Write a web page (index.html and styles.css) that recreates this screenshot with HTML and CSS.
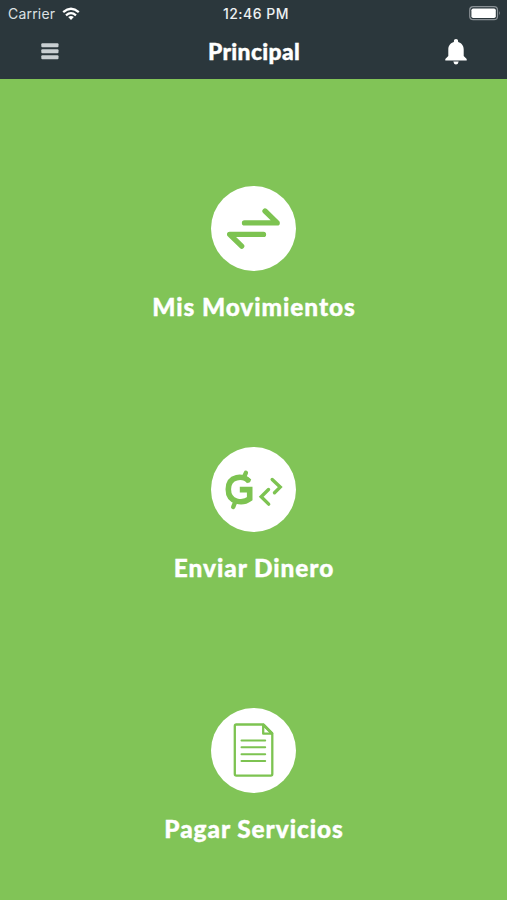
FILE: index.html
```html
<!DOCTYPE html>
<html lang="es">
<head>
<meta charset="utf-8">
<title>Principal</title>
<link rel="stylesheet" href="styles.css">
</head>
<body>
<header class="header">
  <div class="status">
    <div class="carrier"><span class="carrier-name">Carrier</span>
      <svg class="wifi" width="18" height="14" viewBox="0 0 18 14" fill="none" stroke="#fff" stroke-width="2.3"><path d="M1.2 5.2Q9 -1.6 16.8 5.2M4 8.3Q9 4 14 8.3"/><path d="M6.2 10Q9 7.8 11.8 10L9 13Z" fill="#fff" stroke="none"/></svg>
    </div>
    <span class="time">12:46 PM</span>
    <svg class="battery" width="32" height="15" viewBox="0 0 32 15"><rect x=".7" y=".7" width="27.8" height="13" rx="3.5" fill="none" stroke="#899095" stroke-width="1.2"/><rect x="2.4" y="2.4" width="24.4" height="9.6" rx="1.8" fill="#fff"/><path d="M30 5q1.8 2.2 0 4.4z" fill="#899095"/></svg>
  </div>
  <nav class="nav">
    <svg class="menu" width="18" height="17" viewBox="0 0 18 17" fill="#c9cfd2"><rect x=".3" y=".3" width="17.2" height="4" rx="1"/><rect x=".3" y="6.3" width="17.2" height="4" rx="1"/><rect x=".3" y="12.3" width="17.2" height="4" rx="1"/></svg>
    <h1 class="title">Principal</h1>
    <svg class="bell" width="22" height="26" viewBox="0 0 22 26" fill="#fff"><path d="M11 0C9.7 0 8.9 .9 8.9 2.1V3C5.4 3.9 3.3 6.7 3.3 10.4V17L.3 20V21.6H21.7V20L18.7 17V10.4C18.7 6.7 16.6 3.9 13.1 3V2.1C13.1 .9 12.3 0 11 0ZM8.3 22.5H13.7Q13.2 25.4 11 25.4T8.3 22.5Z"/></svg>
  </nav>
</header>
<main class="actions">
  <section class="action">
    <svg class="icon" viewBox="0 0 85 85"><circle cx="42.5" cy="42.5" r="42.5" fill="#fff"/><g class="line" stroke-width="5.3"><path d="M33.5 36.9H66.2L54 25M52.5 48.4H18.6L30.7 60.1"/></g></svg>
    <h2 class="label">Mis Movimientos</h2>
  </section>
  <section class="action">
    <svg class="icon" viewBox="0 0 85 85"><circle cx="42.5" cy="42.5" r="42.5" fill="#fff"/><g class="line"><path class="butt" stroke-width="5.6" d="M38.2 34.3C32.5 27.8 17.3 28.5 17.3 42.3C17.3 56.2 32 56.8 38.7 51.8V42.6H28.8"/><path stroke-width="4.4" d="M34.9 25.8L33 30L37.5 33.4M24 55.5L22.2 60"/><path class="miter" stroke-width="3.4" d="M61.2 32.5L69.2 40.1L63.5 45.8M57.5 42.5L50.2 49.8L57.7 57.1"/></g></svg>
    <h2 class="label">Enviar Dinero</h2>
  </section>
  <section class="action">
    <svg class="icon" viewBox="0 0 85 85"><circle cx="42.5" cy="42.5" r="42.5" fill="#fff"/><g class="line" stroke-width="2.3"><path d="M52.2 16.5H25.3Q23.8 16.5 23.8 18V66.1Q23.8 67.6 25.3 67.6H59.8Q61.3 67.6 61.3 66.1V25.7ZM52.2 16.5V25.7H61.3"/><path d="M52.7 17L60.8 25.2" stroke-width="3"/><path stroke-width="2" d="M30.5 32.5H54.2M30.5 39.3H54.2M30.5 46.2H54.2M30.5 53H54.2"/></g></svg>
    <h2 class="label">Pagar Servicios</h2>
  </section>
</main>
</body>
</html>
```
FILE: styles.css
```css
* { box-sizing: border-box; }
body { margin: 0; height: 900px; overflow: hidden; background: #81c457; color: #fff; font-family: Lato, sans-serif; }
.header { height: 79px; background: #2b373c; }
.status { height: 27px; padding: 0 6px 0 8px; display: grid; grid-template-columns: 1fr auto 1fr; align-items: center; font: 500 13.5px Inter, sans-serif; }
.carrier { display: flex; align-items: center; gap: 7px; }
.carrier-name { font-size: 14px; font-weight: 400; color: #dce1e4; letter-spacing: .2px; }
.time { font-size: 14px; letter-spacing: .5px; padding-left: 3px; color: #eef1f2; }
.battery { justify-self: end; }
.nav { height: 49px; padding: 0 40px 0 41px; display: grid; grid-template-columns: 1fr auto 1fr; align-items: center; }
.title { margin: 0 0 1px; font-size: 22.8px; line-height: 28px; font-weight: 900; letter-spacing: .35px; -webkit-text-stroke: .4px #fff; }
.bell { justify-self: end; }
.actions { height: 821px; padding-top: 107px; display: grid; grid-template-rows: 261px 261px 1fr; }
.action { display: flex; flex-direction: column; align-items: center; }
.icon { width: 85px; height: 85px; flex: none; }
.line { fill: none; stroke: #7dc351; stroke-linecap: round; stroke-linejoin: round; }
.butt { stroke-linecap: butt; stroke-linejoin: miter; }
.miter { stroke-linejoin: miter; }
.label { margin: 20px 0 0; padding-left: 1px; font-size: 24.4px; line-height: 32px; font-weight: 900; letter-spacing: .93px; white-space: nowrap; -webkit-text-stroke: .4px #fff; }
```
